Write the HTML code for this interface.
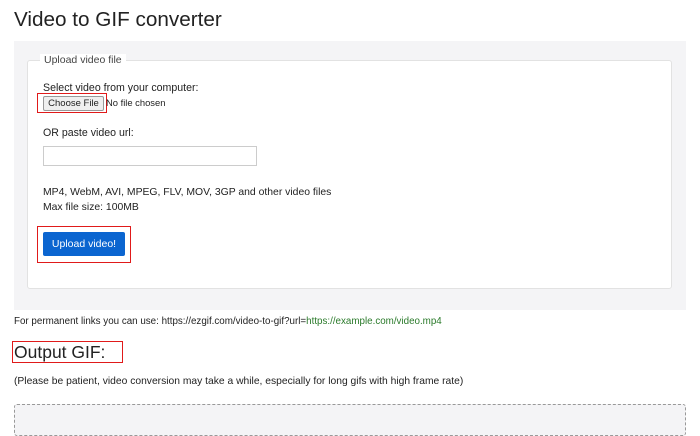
<!DOCTYPE html><html><head><style>
body{margin:0;width:700px;height:428px;overflow:hidden;background:#fff;font-family:"Liberation Sans",sans-serif;color:#222;position:relative}
.a{position:absolute;white-space:nowrap}
</style></head><body>
<div class="a" style="left:14px;top:8px;font-size:20.7px;color:#222">Video to GIF converter</div>
<div class="a" style="left:14px;top:41px;width:672px;height:269px;background:#f4f4f6"></div>
<div class="a" style="left:27px;top:60px;width:643px;height:227px;background:#fff;border:1px solid #e2e2e2;border-radius:3px"></div>
<div class="a" style="left:40px;top:54px;padding:0 4px;background:#fff;font-size:10.5px;color:#444">Upload video file</div>
<div class="a" style="left:43px;top:82px;font-size:10.6px">Select video from your computer:</div>
<div class="a" style="left:37px;top:93px;width:68px;height:18px;border:1px solid #e01a1a"></div>
<div class="a" style="left:43px;top:96px;width:59px;height:13px;background:#efefef;border:1px solid #999;border-radius:2px;font-size:9.5px;line-height:13px;text-align:center">Choose File</div>
<div class="a" style="left:106px;top:97px;font-size:9.4px">No file chosen</div>
<div class="a" style="left:43px;top:127px;font-size:10.6px">OR paste video url:</div>
<div class="a" style="left:43px;top:146px;width:212px;height:18px;border:1px solid #ccc"></div>
<div class="a" style="left:43px;top:185px;font-size:10.4px;line-height:15px">MP4, WebM, AVI, MPEG, FLV, MOV, 3GP and other video files<br>Max file size: 100MB</div>
<div class="a" style="left:37px;top:226px;width:92px;height:35px;border:1px solid #e01a1a"></div>
<div class="a" style="left:43px;top:232px;width:82px;height:24px;background:#0b65d0;border-radius:2px;color:#fff;font-size:10.5px;line-height:25px;text-align:center">Upload video!</div>
<div class="a" style="left:14px;top:316px;font-size:9.8px">For permanent links you can use: https://ezgif.com/video-to-gif?url=<span style="color:#2a7a2a">https://example.com/video.mp4</span></div>
<div class="a" style="left:12px;top:341px;width:109px;height:20px;border:1px solid #e01a1a"></div>
<div class="a" style="left:14px;top:342px;font-size:17.5px">Output GIF:</div>
<div class="a" style="left:14px;top:376px;font-size:10.3px">(Please be patient, video conversion may take a while, especially for long gifs with high frame rate)</div>
<div class="a" style="left:14px;top:404px;width:670px;height:30px;background:#f4f4f6;border:1px dashed #999;border-radius:3px"></div>
</body></html>
